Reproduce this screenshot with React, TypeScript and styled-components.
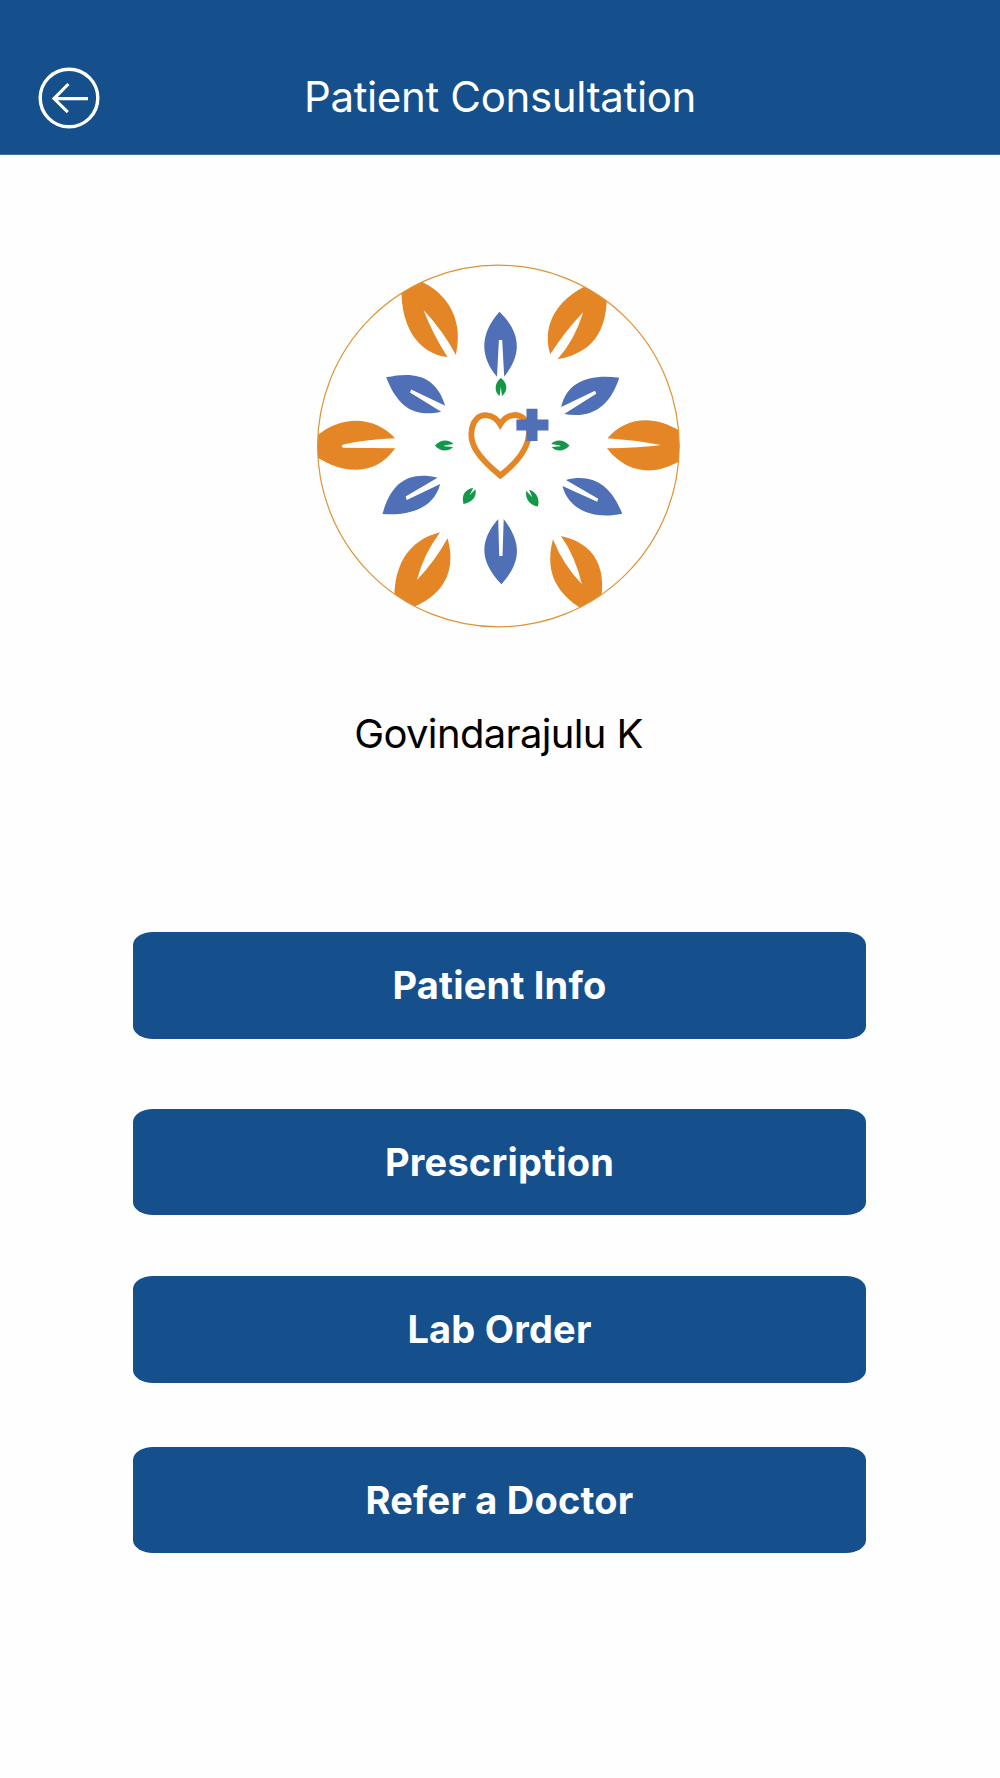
import React from "react"
import styled, { createGlobalStyle } from "styled-components"

const colors = {
    primary: "#15508c",
    orange: "#e58626",
    blue: "#4f6fb6",
    green: "#149848",
}

const GlobalStyle = createGlobalStyle`
    * {
        box-sizing: border-box;
    }

    body {
        margin: 0;
        background: #fefefe;
        font-family: Inter, "Liberation Sans", sans-serif;
    }
`

const Screen = styled.div`
    display: flex;
    flex-direction: column;
    align-items: center;
    min-height: 1778px;
`

const Header = styled.header`
    display: grid;
    grid-template-columns: 100px 1fr 100px;
    align-items: center;
    width: 100%;
    height: 155px;
    padding: 40px 0 0 0;
    border-bottom: 1px solid #3f70a2;
    background: ${colors.primary};
`

const BackButton = styled.button`
    display: flex;
    width: 62px;
    height: 62px;
    margin: 1.6px 0 0 38px;
    padding: 0;
    border: 0;
    background: none;
`

const Title = styled.h1`
    margin: 0.6px 0 0;
    color: #fff;
    font-size: 42px;
    font-weight: 400;
    line-height: 50px;
    letter-spacing: -0.35px;
    text-align: center;
`

const Avatar = styled.div`
    width: 364px;
    height: 364px;
    margin: 109px 4px 0 0;

    svg {
        display: block;
    }
`

const PatientName = styled.p`
    margin: 81px 3px 0 0;
    color: #000;
    font-size: 40px;
    line-height: 50px;
    letter-spacing: -0.65px;
`

const Actions = styled.nav`
    display: flex;
    flex-direction: column;
    width: 733px;
    margin: 173.2px 1px 0 0;
`

const ActionButton = styled.button<{ $gap?: number }>`
    height: 106.4px;
    margin: ${({ $gap = 0 }) => $gap}px 0 0;
    padding: 0;
    border: 0;
    border-radius: 20px / 13px;
    background: ${colors.primary};
    color: #fff;
    font-family: inherit;
    font-size: 38px;
    font-weight: 700;
    letter-spacing: 0.2px;
`

const BackIcon = () => (
    <svg width="62" height="62" viewBox="0 0 62 62" fill="none" stroke="#fff">
        <circle cx="31" cy="31" r="28.8" strokeWidth="3.4" />
        <path d="M50 31.6H16.5M30.4 17L16 31.6L29.8 45.2" strokeWidth="3.1" />
    </svg>
)

const Logo = () => (
    <svg width="364" height="364" viewBox="315.8 264 364 364">
        <defs>
            <clipPath id="badge">
                <circle cx="498.2" cy="446" r="181" />
            </clipPath>
        </defs>
        <circle cx="498.2" cy="446" r="181" fill="#fff" />
        <g clipPath="url(#badge)" fill={colors.orange}>
            <path d="M447.3 357C418 354 397 325 402 277C424 277 468 302 455.7 355Q443 331 423.3 310Q433 335 447.3 357Z" />
            <path d="M550 354.3C540 320 562 291 606 278C610 325 598 352 557.3 359.3Q574 341 583 312.3Q565 331 550 354.3Z" />
            <path d="M395 438.3C374 415 338 414 312 440L312 454C340 474 374 478 395 448.3L343 447.8Q340 446 343 444.6Q368 439 395 438.3Z" />
            <path d="M607.3 438.3C627 415 658 415 684 434L684 458C660 475 629 477 606.7 448.3Q640 448 661 445Q634 440 607.3 438.3Z" />
            <path d="M440 532.3C408 540 390 567 395 612C430 606 460 582 447.3 538.3Q435 561 416.7 580Q424 553 440 532.3Z" />
            <path d="M552.7 539.3C543 577 560 600 597 617C608 580 603 545 560.7 536Q575 556 581.7 584.3Q563 565 552.7 539.3Z" />
        </g>
        <g fill={colors.blue}>
            <path d="M499.3 311.7C480 333 479 356 496.8 376.7L498.7 340H502L504 376.7C522 354 521 333 499.3 311.7Z" />
            <path d="M501.3 584.3C522 561 521 542 503.5 519L502.3 556H499L498 519C479 541 479 561 501.3 584.3Z" />
            <path d="M386 377.3C415 371 436 376 445 405.7L411 389.4L409.8 392.6L441 411.7C413 418 397 406 386 377.3Z" />
            <path d="M619 377.7C588 374 567 382 561 407L594.8 390.8L596 393.8L564 414C592 419 610 406 619 377.7Z" />
            <path d="M382.3 514C391 482 409 471 437.3 477.7L405.4 496.6L406.6 500L440 484C434 507 412 516 382.3 514Z" />
            <path d="M622 513.7C611 485 592 473 565.7 480L598 498.8L597 501.8L562.3 486C568 509 592 520 622 513.7Z" />
        </g>
        <g fill={colors.green}>
            <path d="M500.7 378C494 383 493.8 392 499.4 396L500.6 387L501.8 396C508 391 507.5 383 500.7 378Z" />
            <path d="M434.7 445.6C440 439 449 439 453.3 444L444 445.4V446.2L453 447C448 452 440 452 434.7 445.6Z" />
            <path d="M569.3 445.6C564 439 555 439 551 444L560 445.4V446.2L551.4 447C556 452 564 452 569.3 445.6Z" />
            <path d="M463.3 504C461 495 465 489 473 488L469.4 495.3L475.2 489.2C477 497 472 502 463.3 504Z" />
            <path d="M537.7 506.5C540 499 536 491.5 529 489.7L532 497.2L526 490.8C525 499 529 505 537.7 506.5Z" />
        </g>
        <path
            d="M500 424.4C494 414 480 411 473.5 423C465 443 480 459 500 475.6C520 460 533 443 527.5 424C521 411 507 413 500 424.4Z"
            fill="none"
            stroke={colors.orange}
            strokeWidth="5.8"
        />
        <path
            d="M526.3 408.7H537.3V419.4H548.3V430.6H537.3V441H526.3V430.6H516.2V419.4H526.3Z"
            fill={colors.blue}
        />
        <circle
            cx="498.2"
            cy="446"
            r="180.8"
            fill="none"
            stroke="#dc9437"
            strokeWidth="1.2"
        />
    </svg>
)

export default function App() {
    return (
        <>
            <GlobalStyle />
            <Screen>
                <Header>
                    <BackButton aria-label="Back">
                        <BackIcon />
                    </BackButton>
                    <Title>Patient Consultation</Title>
                </Header>
                <Avatar>
                    <Logo />
                </Avatar>
                <PatientName>Govindarajulu K</PatientName>
                <Actions>
                    <ActionButton>Patient Info</ActionButton>
                    <ActionButton $gap={70}>Prescription</ActionButton>
                    <ActionButton $gap={61.3}>Lab Order</ActionButton>
                    <ActionButton $gap={64.2}>Refer a Doctor</ActionButton>
                </Actions>
            </Screen>
        </>
    )
}
